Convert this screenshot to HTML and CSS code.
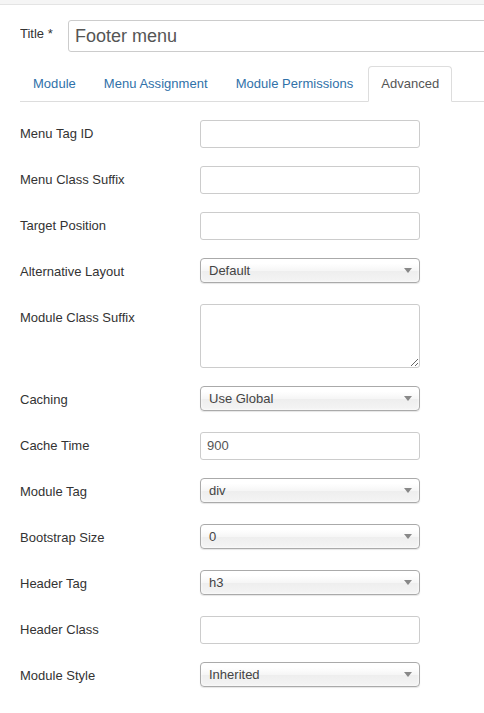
FILE: index.html
```html
<!DOCTYPE html>
<html>
<head>
<meta charset="utf-8">
<link rel="stylesheet" href="styles.css">
</head>
<body>
<div class="topbar"></div>
<div class="page">
  <div class="title-row">
    <label class="title-label">Title *</label>
    <div class="title-input">Footer menu</div>
  </div>
  <ul class="tabs">
    <li><a>Module</a></li>
    <li><a>Menu Assignment</a></li>
    <li><a>Module Permissions</a></li>
    <li class="active"><a>Advanced</a></li>
  </ul>
  <div class="form">
    <div class="row"><div class="label">Menu Tag ID</div><div class="input"></div></div>
    <div class="row"><div class="label">Menu Class Suffix</div><div class="input"></div></div>
    <div class="row"><div class="label">Target Position</div><div class="input"></div></div>
    <div class="row"><div class="label">Alternative Layout</div><div class="select"><span>Default</span><i class="arrow"></i></div></div>
    <div class="row"><div class="label">Module Class Suffix</div><textarea class="textarea"></textarea></div>
    <div class="row"><div class="label">Caching</div><div class="select"><span>Use Global</span><i class="arrow"></i></div></div>
    <div class="row"><div class="label">Cache Time</div><div class="input">900</div></div>
    <div class="row"><div class="label">Module Tag</div><div class="select"><span>div</span><i class="arrow"></i></div></div>
    <div class="row"><div class="label">Bootstrap Size</div><div class="select"><span>0</span><i class="arrow"></i></div></div>
    <div class="row"><div class="label">Header Tag</div><div class="select"><span>h3</span><i class="arrow"></i></div></div>
    <div class="row"><div class="label">Header Class</div><div class="input"></div></div>
    <div class="row"><div class="label">Module Style</div><div class="select"><span>Inherited</span><i class="arrow"></i></div></div>
  </div>
</div>
</body>
</html>
```
FILE: styles.css
```css
html, body {
  margin: 0;
  padding: 0;
  background: #fff;
  overflow: hidden;
}
body {
  font-family: "Liberation Sans", Arial, sans-serif;
  font-size: 13px;
  line-height: 18px;
  color: #333;
  width: 484px;
  height: 713px;
}
.topbar {
  height: 4px;
  background: #f5f5f5;
  border-bottom: 1px solid #e4e4e4;
}
.page {
  padding: 15px 0 0 20px;
}
.title-row {
  display: flex;
  align-items: flex-start;
  height: 32px;
  overflow: hidden;
}
.title-label {
  flex: none;
  width: 48px;
  padding-top: 5px;
  color: #333;
  white-space: nowrap;
}
.title-input {
  box-sizing: border-box;
  flex: none;
  width: 440px;
  height: 32px;
  padding: 4px 6px;
  border: 1px solid #ccc;
  border-radius: 3px;
  font-size: 18px;
  line-height: 22px;
  color: #555;
}
.tabs {
  list-style: none;
  margin: 14px 0 0 0;
  padding: 0;
  display: flex;
  border-bottom: 1px solid #ddd;
  height: 35px;
}
.tabs li {
  margin-right: 2px;
  margin-bottom: -1px;
}
.tabs a {
  display: block;
  padding: 8px 12px;
  line-height: 18px;
  border: 1px solid transparent;
  border-radius: 4px 4px 0 0;
  color: #3071a9;
  letter-spacing: 0.03px;
}
.tabs .active a {
  color: #555;
  background: #fff;
  border-color: #ddd #ddd transparent;
}
.form {
  padding-top: 18px;
  display: flex;
  flex-direction: column;
  gap: 18px;
}
.row {
  display: flex;
  align-items: flex-start;
  min-height: 28px;
}
.label {
  width: 180px;
  padding-top: 5px;
  flex: none;
}
.input {
  box-sizing: border-box;
  width: 220px;
  height: 28px;
  padding: 4px 6px;
  border: 1px solid #ccc;
  border-radius: 3px;
  color: #555;
  line-height: 18px;
}
.textarea {
  box-sizing: border-box;
  width: 220px;
  height: 64px;
  margin: 0;
  padding: 4px 6px;
  border: 1px solid #ccc;
  border-radius: 3px;
  font-family: inherit;
  font-size: 13px;
}
.select {
  box-sizing: border-box;
  width: 220px;
  height: 25px;
  padding: 2px 8px;
  border: 1px solid #aaa;
  border-radius: 4px;
  background: linear-gradient(#ffffff 20%, #f6f6f6 50%, #eeeeee 52%, #f4f4f4 100%);
  box-shadow: 0 0 3px #fff inset, 0 1px 1px rgba(0,0,0,0.1);
  display: flex;
  align-items: center;
  justify-content: space-between;
  color: #444;
}
.arrow {
  width: 0;
  height: 0;
  border-left: 4px solid transparent;
  border-right: 4px solid transparent;
  border-top: 5px solid #888;
  margin-right: -1px;
}
```
